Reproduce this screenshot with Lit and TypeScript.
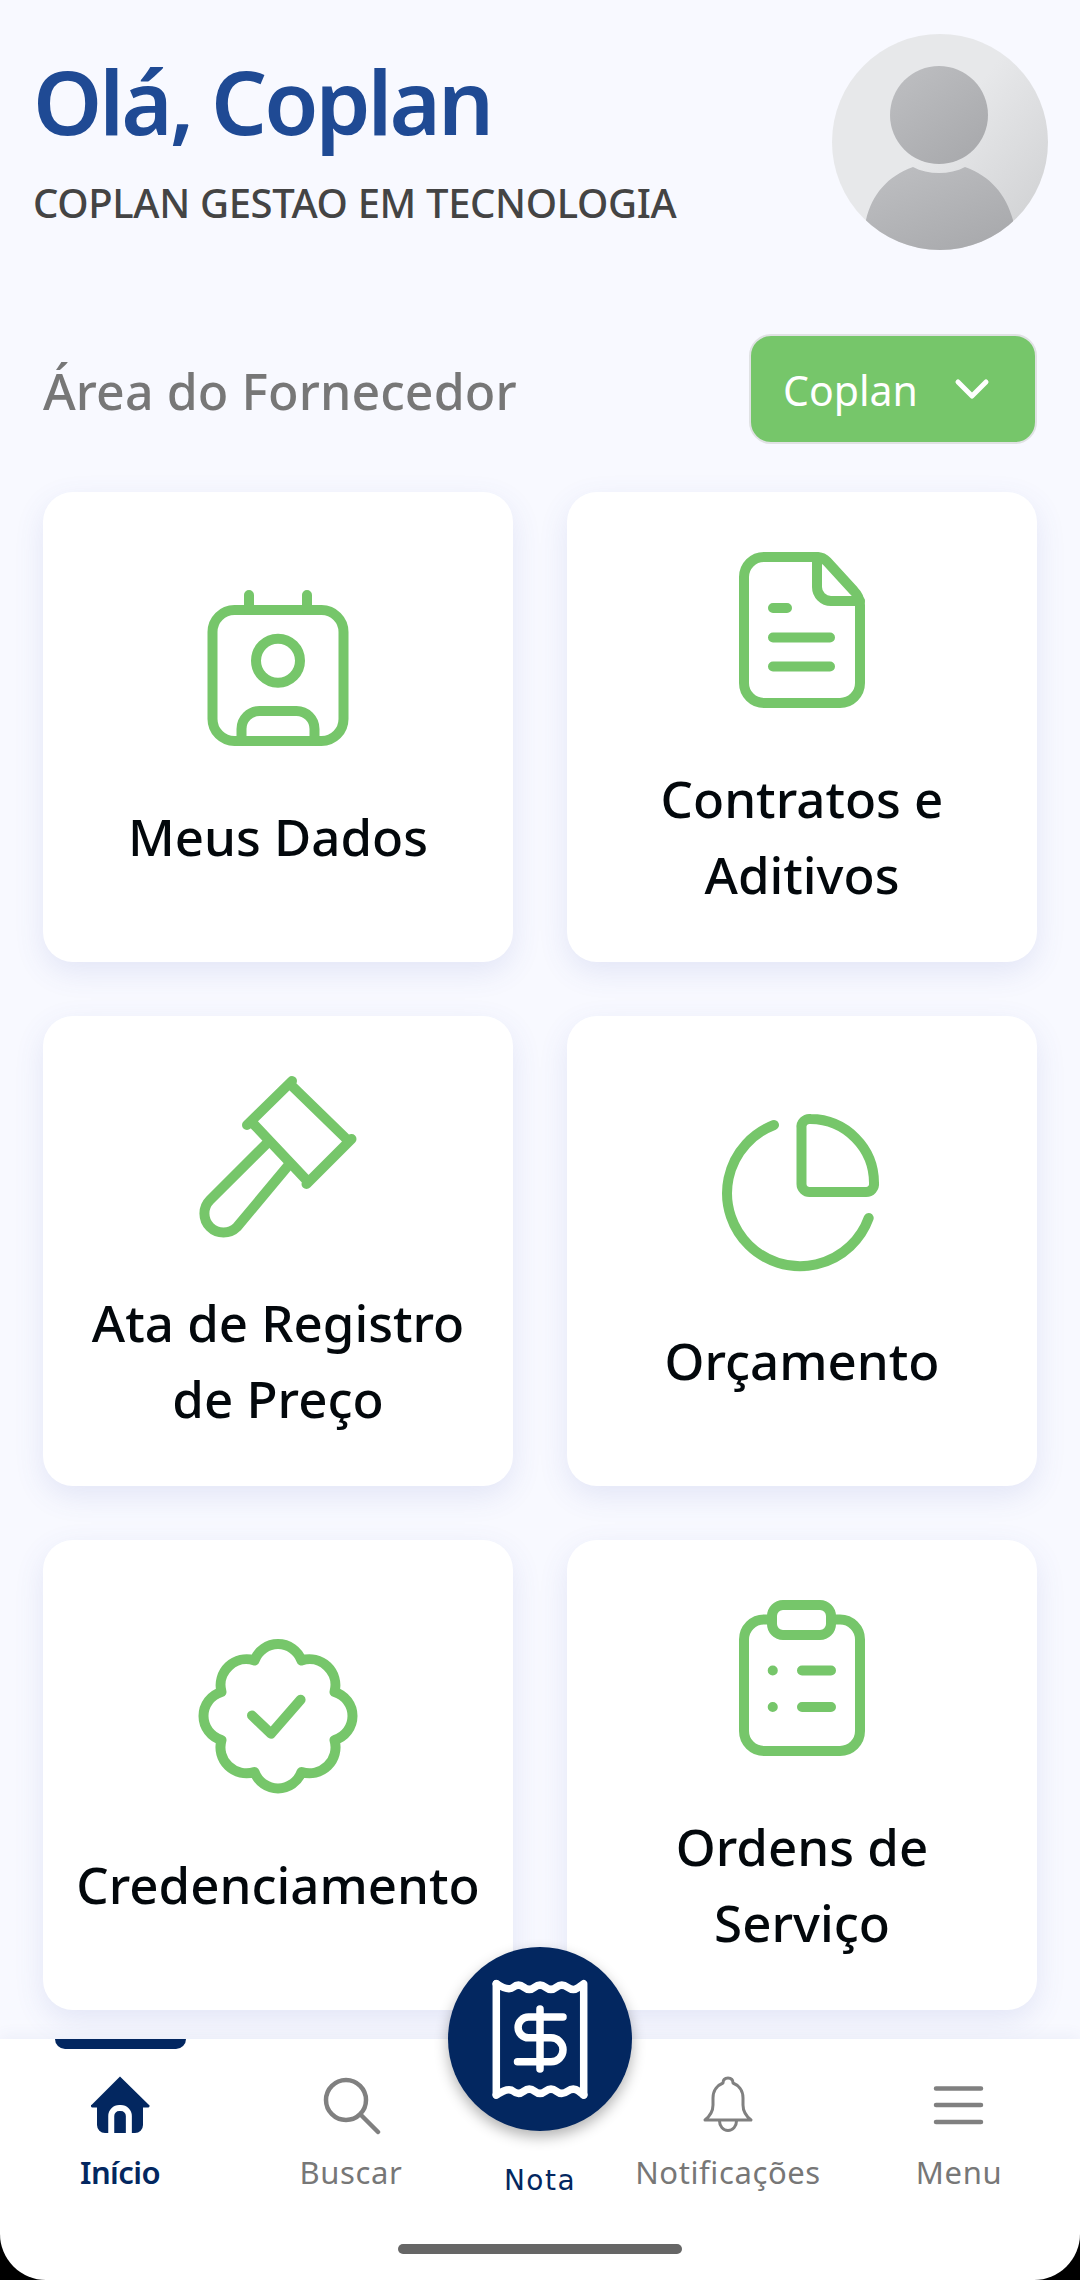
import { LitElement, html, css, svg } from "lit";
import { customElement } from "lit/decorators.js";

const GREEN_ICONS = {
  dados: svg`
    <rect x="19.5" y="27" width="131" height="131" rx="22" />
    <path d="M56 12V27M114 12V27" />
    <circle cx="85" cy="77.7" r="22" />
    <path d="M48.5 158V146a18 18 0 0 1 18-18h37a18 18 0 0 1 18 18v12" />`,
  contratos: svg`
    <path d="M100 12H47a20 20 0 0 0-20 20v106a20 20 0 0 0 20 20h76a20 20 0 0 0 20-20V60a20 20 0 0 0-6-14L110 16.500a14 14 0 0 0-10-4.500z" />
    <path d="M100 12V42a14 14 0 0 0 14 14H143" />
    <path d="M56 63H70M56 92.5H113M56 121.5H113" />`,
  ata: svg`
    <path d="M99 12L54 56M158.500 70L113.500 115M98 16L153.500 70M61.500 56L112.500 110" />
    <path d="M73.600 74.600L17 131a19 19 0 0 0 27 27L95.500 96.300" />`,
  orcamento: svg`
    <path d="M84.500 21a8 8 0 0 1 9-9A64 64 0 0 1 157 76a8 8 0 0 1-8 9H93a8 8 0 0 1-8.500-8z" />
    <path d="M57 18A73 73 0 1 0 151.700 111" />`,
  credenciamento: svg`
    <path d="M61.500 29.500A25 25 0 0 1 108.500 29.500A26 26 0 0 1 141.500 61A25 25 0 0 1 141.500 109A26 26 0 0 1 108.500 141A25 25 0 0 1 61.500 141A26 26 0 0 1 28.500 109A25 25 0 0 1 28.500 61A26 26 0 0 1 61.500 29.500z" />
    <path d="M59 84.500L78 102.700L107.600 68.800" />`,
  ordens: svg`
    <path d="M55 26.500H47a20 20 0 0 0-20 20V138a20 20 0 0 0 20 20h76a20 20 0 0 0 20-20V46.500a20 20 0 0 0-20-20h-9" />
    <rect x="55" y="12" width="59" height="30" rx="11" />
    <path d="M55.700 77.500h.1M55.700 114h.1M85 77.500H114M85 114H114" />`,
};

const CARDS = [
  { icon: GREEN_ICONS.dados, label: html`Meus Dados` },
  { icon: GREEN_ICONS.contratos, label: html`Contratos e<br />Aditivos` },
  { icon: GREEN_ICONS.ata, label: html`Ata de Registro<br />de Preço` },
  { icon: GREEN_ICONS.orcamento, label: html`Orçamento` },
  { icon: GREEN_ICONS.credenciamento, label: html`Credenciamento` },
  { icon: GREEN_ICONS.ordens, label: html`Ordens de<br />Serviço` },
];

// rounds the corners of a zigzag, used for the torn edges of the receipt
function wave(pts: number[][]): string {
  let d = `M${pts[0][0]} ${pts[0][1]}`;
  for (let i = 1; i < pts.length - 1; i++) {
    const [x, y] = pts[i];
    const [nx, ny] = pts[i + 1];
    d += `Q${x} ${y} ${(x + nx) / 2} ${(y + ny) / 2}`;
  }
  const last = pts[pts.length - 1];
  return `${d}L${last[0]} ${last[1]}`;
}

const TOP_EDGE = [
  [16.3, 9.7], [28.3, 17.5], [38.3, 9], [49.3, 17.5], [60, 9], [71, 17.5], [81.7, 9], [93.3, 17.5], [103.7, 9.7],
];
const BOTTOM_EDGE = [
  [16.3, 121], [28.3, 113], [38.3, 121.5], [49.3, 113], [60, 121.5], [71, 113], [81.7, 121.5], [93.3, 113], [103.7, 121],
];

@customElement("app-root")
export class AppRoot extends LitElement {
  private renderAvatar() {
    return html`
      <svg class="avatar" viewBox="0 0 216 216">
        <defs>
          <linearGradient id="avatar-bg" x1="0.35" y1="0.35" x2="1" y2="0.9">
            <stop offset="0.2" stop-color="#e7e8ea" />
            <stop offset="1" stop-color="#cfd0d2" />
          </linearGradient>
          <linearGradient id="avatar-fg" x1="0.2" y1="0.1" x2="0.9" y2="1">
            <stop offset="0" stop-color="#bbbcbf" />
            <stop offset="1" stop-color="#a7a8ab" />
          </linearGradient>
          <clipPath id="avatar-clip"><circle cx="108" cy="108" r="108" /></clipPath>
        </defs>
        <g clip-path="url(#avatar-clip)">
          <rect width="216" height="216" fill="url(#avatar-bg)" />
          <circle cx="107" cy="81" r="49" fill="url(#avatar-fg)" />
          <path
            d="M34 186C40 160 56 142 81 133C96 141 118 141 133 133C158 142 174 160 181 186V216H34z"
            fill="url(#avatar-fg)"
          />
        </g>
      </svg>
    `;
  }

  private renderNav() {
    return html`
      <div class="nav-back">
        <nav class="nav">
          <div class="tab active">
            <span class="indicator"></span>
            <svg class="tab-icon" viewBox="0 0 60 60">
              <path
                fill="#032760"
                d="M30 1.500L58.500 29.500a1.500 1.500 0 0 1-1 3H53V50a8 8 0 0 1-8 8H15a8 8 0 0 1-8-8V32.500H3a1.500 1.500 0 0 1-1-3z"
              />
              <path
                fill="none"
                stroke="#fff"
                stroke-width="6"
                d="M21.250 58V41a8 8 0 0 1 8-8h1.600a8 8 0 0 1 8 8V58"
              />
            </svg>
            <span class="tab-label">Início</span>
          </div>
          <div class="tab">
            <svg class="tab-icon line" viewBox="0 0 60 60">
              <circle cx="25" cy="25" r="20" stroke-width="4.500" />
              <path d="M39.500 39.500L57 57" stroke-width="4.500" />
            </svg>
            <span class="tab-label">Buscar</span>
          </div>
          <div class="tab nota">
            <div class="fab">
              <svg viewBox="0 0 120 130" width="120" height="130">
                <path d="${wave(TOP_EDGE)}V121" />
                <path d="M16.300 9.700V121" />
                <path d="${wave(BOTTOM_EDGE)}" />
                <path d="M60 35V95M83 43H48.500a10.400 10.400 0 0 0 0 20.800H71a12 12 0 0 1 0 24H37.500" />
              </svg>
            </div>
            <span class="tab-label">Nota</span>
          </div>
          <div class="tab">
            <svg class="tab-icon line" viewBox="0 0 60 60">
              <path
                stroke-width="3"
                d="M7 45C12 41 15 36 15 30V23C15 15 20 10 25 8C25 4 27 3 30 3C33 3 35 4 35 8C40 10 45 15 45 23V30C45 36 48 41 53 45z"
              />
              <path stroke-width="3" d="M21.500 46c0 5 3.500 9.500 8.500 9.500s8.500-4.500 8.500-9.500" />
            </svg>
            <span class="tab-label">Notificações</span>
          </div>
          <div class="tab">
            <svg class="tab-icon line" viewBox="0 0 60 60">
              <path stroke-width="4.500" d="M7 13.500H52M7 30H52M7 47H52" />
            </svg>
            <span class="tab-label">Menu</span>
          </div>
          <span class="home-bar"></span>
        </nav>
      </div>
    `;
  }

  render() {
    return html`
      <div class="screen">
        <main class="content">
          <header class="header">
            <div class="greeting">
              <h1>Olá, Coplan</h1>
              <p>COPLAN GESTAO EM TECNOLOGIA</p>
            </div>
            ${this.renderAvatar()}
          </header>

          <div class="section">
            <h2>Área do Fornecedor</h2>
            <button class="select">
              <span>Coplan</span>
              <svg viewBox="0 0 36 24" width="36" height="24">
                <path d="M4 5L18 19L32 5" />
              </svg>
            </button>
          </div>

          <div class="grid">
            ${CARDS.map(
              (c) => html`
                <div class="card">
                  <svg class="card-icon" viewBox="0 0 170 170">${c.icon}</svg>
                  <div class="card-label">${c.label}</div>
                </div>
              `,
            )}
          </div>
        </main>
        ${this.renderNav()}
      </div>
    `;
  }

  static styles = css`
    :host {
      display: block;
      width: 1080px;
      height: 2280px;
      --navy: #032760;
      --green: #76c66a;
    }

    * {
      box-sizing: border-box;
    }

    .screen {
      display: flex;
      flex-direction: column;
      height: 2280px;
      overflow: hidden;
      background: #f8f9ff;
      font-family: "Noto Sans", sans-serif;
    }

    .content {
      height: 2039px;
      flex: none;
    }

    .header {
      display: flex;
      justify-content: space-between;
      padding: 34px 32px 0 33px;
    }

    .greeting {
      padding-top: 17px;
    }

    h1 {
      margin: 0;
      font-size: 88px;
      line-height: 100px;
      font-weight: 600;
      letter-spacing: -3px;
      color: #1f4a94;
    }

    .greeting p {
      margin: 27px 0 0;
      font-size: 40px;
      line-height: 50px;
      font-weight: 500;
      letter-spacing: -0.35px;
      color: #444;
    }

    .avatar {
      width: 216px;
      height: 216px;
      display: block;
    }

    .section {
      display: flex;
      justify-content: space-between;
      align-items: center;
      margin-top: 84px;
      padding: 0 43px;
    }

    h2 {
      margin: 0;
      padding-top: 4px;
      font-size: 50px;
      font-weight: 500;
      letter-spacing: 0.1px;
      color: #777;
    }

    .select {
      display: flex;
      align-items: center;
      gap: 36px;
      width: 288px;
      height: 110px;
      padding: 0 0 0 32px;
      border: 2px solid #e0e2e4;
      border-radius: 22px;
      background: var(--green);
      color: #fff;
      font-family: inherit;
      font-size: 41px;
    }

    .select span {
      padding-top: 2px;
    }

    .select svg path {
      fill: none;
      stroke: #fff;
      stroke-width: 5;
      stroke-linecap: round;
      stroke-linejoin: round;
    }

    .grid {
      display: grid;
      grid-template-columns: 470px 470px;
      gap: 54px;
      margin-top: 48px;
      padding: 0 43px;
    }

    .card {
      height: 470px;
      display: flex;
      flex-direction: column;
      align-items: center;
      justify-content: center;
      gap: 42px;
      border-radius: 30px;
      background: #fff;
      box-shadow: 0 10px 30px rgba(70, 90, 180, 0.12);
    }

    .card-icon {
      width: 170px;
      height: 170px;
      flex: none;
      fill: none;
      stroke: var(--green);
      stroke-width: 10;
      stroke-linecap: round;
      stroke-linejoin: round;
    }

    .card-label {
      margin: 3px 0 -3px;
      font-size: 51px;
      line-height: 76px;
      font-weight: 500;
      text-align: center;
      color: #03080c;
    }

    .nav-back {
      flex: 1;
      background: #000;
      box-shadow: 0 -4px 14px rgba(70, 90, 150, 0.06);
    }

    .nav {
      position: relative;
      display: grid;
      grid-template-columns: 240px 222px 156px 220px 242px;
      height: 241px;
      background: #fff;
      border-radius: 0 0 46px 46px;
    }

    .tab {
      position: relative;
      display: flex;
      flex-direction: column;
      align-items: center;
      padding-top: 36px;
    }

    .indicator {
      position: absolute;
      top: 0;
      left: 55px;
      width: 131px;
      height: 10px;
      border-radius: 0 0 10px 10px;
      background: var(--navy);
    }

    .tab-icon {
      width: 60px;
      height: 60px;
      flex: none;
    }

    .tab-icon.line {
      fill: none;
      stroke: #808080;
      stroke-linecap: round;
      stroke-linejoin: round;
    }

    .tab-label {
      margin-top: 16px;
      font-size: 31px;
      line-height: 42px;
      letter-spacing: 0.6px;
      color: #777;
      white-space: nowrap;
    }

    .tab.active .tab-label {
      font-weight: 600;
      letter-spacing: -0.6px;
      color: var(--navy);
    }

    .tab.nota {
      padding-top: 121px;
    }

    .tab.nota .tab-label {
      margin-top: 0;
      font-family: "DejaVu Sans", sans-serif;
      font-size: 28px;
      letter-spacing: 1.5px;
      color: var(--navy);
    }

    .fab {
      position: absolute;
      top: -92px;
      left: -14px;
      width: 184px;
      height: 184px;
      display: flex;
      align-items: center;
      justify-content: center;
      border-radius: 50%;
      background: var(--navy);
      box-shadow: 0 6px 14px rgba(0, 0, 0, 0.3);
    }

    .fab path {
      fill: none;
      stroke: #fff;
      stroke-width: 7.5;
      stroke-linecap: round;
      stroke-linejoin: round;
    }

    .home-bar {
      position: absolute;
      left: 398px;
      bottom: 26px;
      width: 284px;
      height: 10px;
      border-radius: 5px;
      background: #666;
    }
  `;
}
